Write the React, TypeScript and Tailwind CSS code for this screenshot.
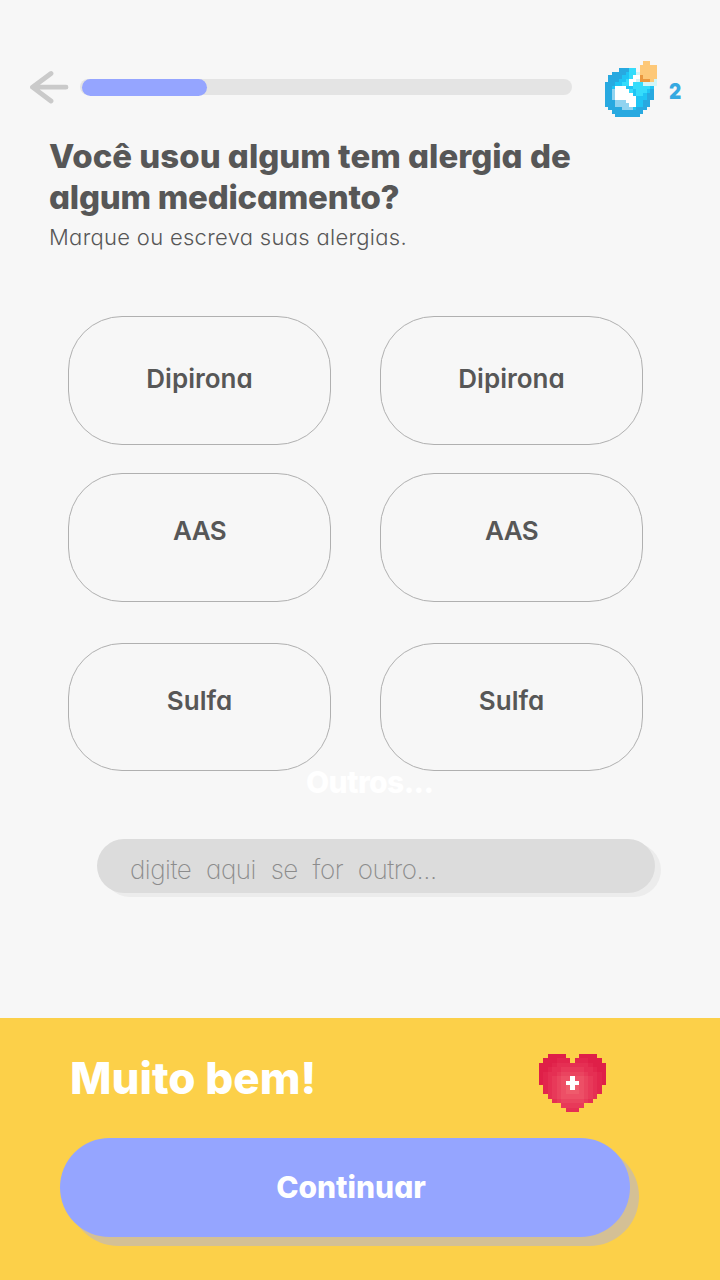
const GEM = [
  "...........OO..",
  "..........OOOOO",
  "....DDDCC.OOOOO",
  "..DDDDMCCPOOOOO",
  ".DDDDMMCWWQOOOO",
  ".DDDMMCWWPQQQOP",
  "DDDMMCCWCCCPPPP",
  "DDMWWWMMCCCCCM.",
  "DDLWWWWCMCCCMD.",
  "DDLWWWWWMCCMDD.",
  "DDLWWWWWWMMMDD.",
  "DDDLLLWWWMMDD..",
  "DDDLLLLWWMMDD..",
  ".DDDDLLLMDDD...",
  "..DDDDDDDDD....",
  "...DDDDDDD.....",
];

const GEM_COLORS: Record<string, string> = {
  D: "#28a9e0",
  M: "#1fc4f4",
  C: "#35dcfb",
  L: "#90d3f0",
  W: "#ffffff",
  P: "#d2f6f8",
  O: "#fdc878",
  Q: "#ea983f",
};

// first and last filled column for each row
const HEART = [
  [[2, 5], [9, 12]],
  [[1, 6], [8, 13]],
  [[0, 14]],
  [[0, 14]],
  [[0, 14]],
  [[0, 14]],
  [[0, 14]],
  [[1, 13]],
  [[1, 13]],
  [[2, 12]],
  [[3, 11]],
  [[5, 9]],
  [[6, 8]],
];

const HEART_SHADES = ["#f26573", "#ef5b6c", "#ed4f66", "#ea445f", "#e83959", "#e52f53", "#e2264d", "#df1f48"];

function heartShade(col: number, row: number) {
  const distance = Math.hypot(col - 7, row - 7);
  return HEART_SHADES[Math.min(7, Math.floor(distance))];
}

const options = [
  { label: "Dipirona", row: "h-[129px] pb-[5px]" },
  { label: "AAS", row: "mt-[28px] h-[129px] pb-[14px] tracking-[-0.7px]" },
  { label: "Sulfa", row: "mt-[41px] h-[128px] pb-[13px]" },
];

export default function App() {
  return (
    <main className="flex h-[1280px] w-[720px] flex-col overflow-hidden bg-[#f7f7f7] font-['Inter','Liberation_Sans',sans-serif] text-[#575757] [font-feature-settings:'cv11']">
      <header className="flex h-[136px] items-start pl-[30px] pt-[61px]">
        <ArrowIcon />
        <div className="ml-[11px] mt-[18px] flex h-[16px] w-[492px] rounded-full bg-[#e4e4e4] pl-[2px]">
          <div className="h-[17px] w-[125px] rounded-full bg-[#95a5ff]" />
        </div>
        <GemIcon />
        <span className="ml-[12px] mt-[15px] text-[22px] font-black leading-[30px] text-[#36a9e1]">
          <span className="inline-block origin-left scale-x-[0.86]">2</span>
        </span>
      </header>

      <section className="h-[180px] pl-[49px]">
        <h1 className="whitespace-nowrap text-[33px] font-extrabold leading-[41px]">
          Você usou algum tem alergia de
          <br />
          <span className="tracking-[-0.25px]">algum medicamento?</span>
        </h1>
        <p className="mt-[4px] whitespace-nowrap text-[22px] font-light leading-[30px] tracking-[0.3px]">Marque ou escreva suas alergias.</p>
      </section>

      <section className="pl-[68px]">
        {options.map((option) => (
          <div key={option.label} className="flex gap-[49px]">
            <Option label={option.label} row={option.row} />
            <Option label={option.label} row={option.row} />
          </div>
        ))}
      </section>

      <p className="-mt-[9px] h-[40px] pl-[306px] text-[30px] font-extrabold leading-[40px] tracking-[-0.6px] text-white">Outros...</p>
      <input
        placeholder="digite aqui se for outro..."
        className="ml-[97px] mt-[37px] h-[54px] w-[558px] rounded-full bg-[#dcdcdc] pl-[33px] pt-[6px] text-[26px] font-extralight tracking-[-0.5px] [word-spacing:8px] shadow-[6px_4px_0_#ececec] outline-none placeholder:text-[#8c8c8c]"
      />

      <footer className="mt-auto h-[262px] bg-[#fcd049]">
        <div className="flex h-[120px] items-start pl-[70px] pt-[35px]">
          <h2 className="-mt-px w-[469px] text-[44px] font-extrabold leading-[52px] text-white">Muito bem!</h2>
          <HeartIcon />
        </div>
        <button type="button" className="ml-[60px] flex h-[99px] w-[570px] items-center justify-center rounded-full bg-[#95a5ff] pb-px pl-[12px] text-[30px] font-extrabold text-white shadow-[9px_9px_0_#d4c095]">
          Continuar
        </button>
      </footer>
    </main>
  );
}

function Option({ label, row }: { label: string; row: string }) {
  return (
    <button type="button" className={`${row} flex w-[263px] items-center justify-center rounded-[54px] border border-[#b0b0b0] text-[26px] font-semibold`}>
      {label}
    </button>
  );
}

function ArrowIcon() {
  return (
    <svg className="mt-[9px] h-[34px] w-[39px]" viewBox="0 0 39 34" fill="none" stroke="#cacaca" strokeWidth="4.8" strokeLinecap="round" strokeLinejoin="round">
      <path d="M36 17.2H3M21 3.5L2.5 17.2L21 31" />
    </svg>
  );
}

function GemIcon() {
  return (
    <svg className="ml-[33px] h-[56px] w-[52px]" viewBox="0 0 15 16" preserveAspectRatio="none" shapeRendering="crispEdges">
      {GEM.map((line, y) =>
        [...line].map((cell, x) => (cell === "." ? null : <rect key={`${x}-${y}`} x={x} y={y} width="1" height="1" fill={GEM_COLORS[cell]} />))
      )}
    </svg>
  );
}

function HeartIcon() {
  return (
    <svg className="mt-px h-[58px] w-[67px]" viewBox="0 0 15 13" preserveAspectRatio="none" shapeRendering="crispEdges">
      {HEART.map((spans, y) =>
        spans.map(([from, to]) =>
          Array.from({ length: to - from + 1 }, (_, i) => (
            <rect key={`${from + i}-${y}`} x={from + i} y={y} width="1" height="1" fill={heartShade(from + i, y)} />
          ))
        )
      )}
      <path d="M7 5h1v3h-1zM6 6h3v1h-3z" fill="#fff" />
    </svg>
  );
}
